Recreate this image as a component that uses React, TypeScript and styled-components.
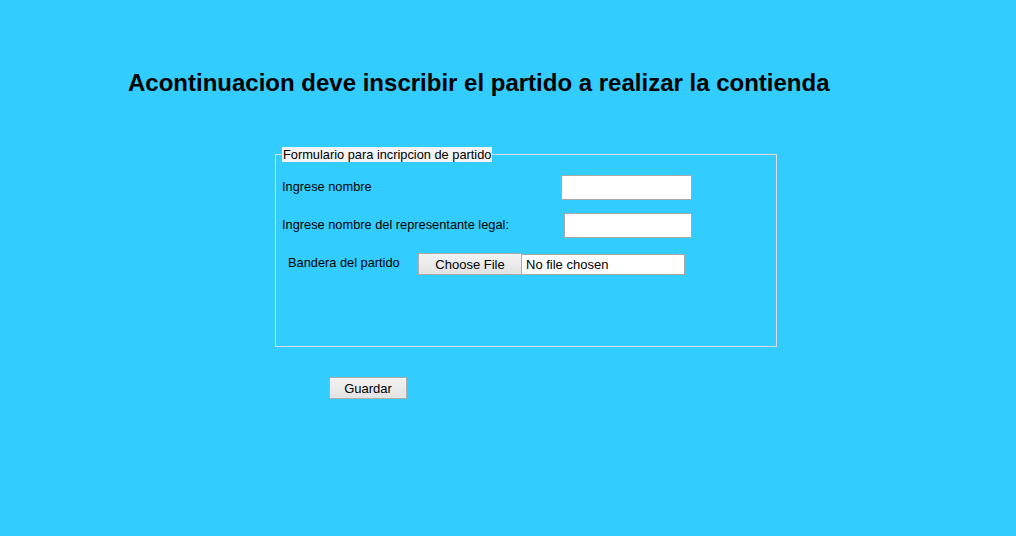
import styled, { createGlobalStyle } from "styled-components";

const GlobalStyle = createGlobalStyle`
    body {
        margin: 0;
        background: #33ccff;
        font-family: "Liberation Sans", Arial, sans-serif;
    }
`

const Page = styled.div`
    width: 1016px;
    height: 536px;
    background: #33ccff;
    overflow: hidden;
`

const Title = styled.h1`
    margin: 0;
    padding: 69px 0 0 128px;
    font-size: 24px;
    line-height: 28px;
    font-weight: bold;
    color: #000;
`

const Fieldset = styled.fieldset`
    box-sizing: border-box;
    width: 502px;
    margin: 50px 0 0 275px;
    padding: 0 6px;
    border: 1px solid #dedede;
`

const Legend = styled.legend`
    padding: 0 1px;
    font-size: 12.8px;
    line-height: 15px;
    background: #f4f4f4;
    color: #000;
`

const Body = styled.div`
    height: 184px;
    padding-top: 13px;
    box-sizing: border-box;
`

const Row = styled.div<{ gap: number }>`
    display: flex;
    align-items: center;
    margin-bottom: ${(p) => p.gap}px;
`

const Label = styled.span<{ width: number; indent?: number }>`
    width: ${(p) => p.width}px;
    padding-left: ${(p) => p.indent ?? 0}px;
    margin-bottom: 3px;
    font-size: 12.8px;
    color: #000;
    flex-shrink: 0;
`

const TextInput = styled.input<{ size: number }>`
    box-sizing: border-box;
    width: ${(p) => p.size}px;
    height: 25px;
    border: 1px solid #a9a9a9;
    background: #fff;
    margin: 0;
    padding: 2px;
`

const GrayButton = styled.button<{ w: number }>`
    box-sizing: border-box;
    width: ${(p) => p.w}px;
    height: 22px;
    padding: 0;
    border: 1px solid #acacac;
    background: linear-gradient(#f2f2f2, #e3e3e3);
    font-family: "Liberation Sans", Arial, sans-serif;
    font-size: 13px;
    color: #000;
`

const FileName = styled.span`
    box-sizing: border-box;
    display: inline-block;
    width: 163px;
    height: 21px;
    line-height: 19px;
    padding-left: 4px;
    border: 1px solid #a9a9a9;
    border-left: none;
    background: #fff;
    font-size: 13px;
    color: #000;
`

const FilePicker = styled.div`
    display: flex;
    align-items: center;
`

const Footer = styled.div`
    padding: 30px 0 0 329px;
`

export default function App() {
    return (
        <Page>
            <GlobalStyle />
            <Title>Acontinuacion deve inscribir el partido a realizar la contienda</Title>
            <Fieldset>
                <Legend>Formulario para incripcion de partido</Legend>
                <Body>
                    <Row gap={13}>
                        <Label width={279}>Ingrese nombre</Label>
                        <TextInput type="text" size={131} />
                    </Row>
                    <Row gap={15}>
                        <Label width={282}>Ingrese nombre del representante legal:</Label>
                        <TextInput type="text" size={128} />
                    </Row>
                    <Row gap={0}>
                        <Label width={130} indent={6}>Bandera del partido</Label>
                        <FilePicker>
                            <GrayButton w={104}>Choose File</GrayButton>
                            <FileName>No file chosen</FileName>
                        </FilePicker>
                    </Row>
                </Body>
            </Fieldset>
            <Footer>
                <GrayButton w={78}>Guardar</GrayButton>
            </Footer>
        </Page>
    )
}
